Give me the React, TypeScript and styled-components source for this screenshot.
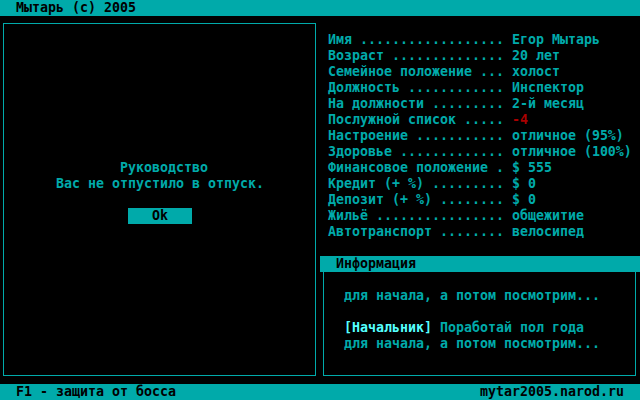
import React from 'react';
import styled, { createGlobalStyle } from 'styled-components';

const CYAN = '#00aaaa';
const BRIGHT_CYAN = '#55ffff';
const RED = '#aa0000';

const GlobalStyle = createGlobalStyle`
  html, body {
    margin: 0;
    padding: 0;
    background: #000;
  }
`;

type Stat = { name: string; value: string; alert?: boolean };

const stats: Stat[] = [
  { name: 'Имя', value: 'Егор Мытарь' },
  { name: 'Возраст', value: '20 лет' },
  { name: 'Семейное положение', value: 'холост' },
  { name: 'Должность', value: 'Инспектор' },
  { name: 'На должности', value: '2-й месяц' },
  { name: 'Послужной список', value: '-4', alert: true },
  { name: 'Настроение', value: 'отличное (95%)' },
  { name: 'Здоровье', value: 'отличное (100%)' },
  { name: 'Финансовое положение', value: '$ 555' },
  { name: 'Кредит (+ %)', value: '$ 0' },
  { name: 'Депозит (+ %)', value: '$ 0' },
  { name: 'Жильё', value: 'общежитие' },
  { name: 'Автотранспорт', value: 'велосипед' },
];

// label column is 23 cells wide: name, space, dot leader, space
const leader = (name: string) => `${name} ${'.'.repeat(21 - name.length)} `;

const App: React.FC = () => {
  return (
    <>
      <GlobalStyle />
      <Screen>
        <Bar>
          <span>Мытарь (с) 2005</span>
        </Bar>

        <Main>
          <LeftColumn>
            <Panel>
              <Line $col={15}>Руководство</Line>
              <Line $col={7}>Вас не отпустило в отпуск.</Line>
              <OkButton>Ok</OkButton>
            </Panel>
          </LeftColumn>

          <RightColumn>
            <StatList>
              {stats.map(s => (
                <StatRow key={s.name}>
                  {leader(s.name)}
                  <StatValue $alert={s.alert}>{s.value}</StatValue>
                </StatRow>
              ))}
            </StatList>

            <InfoHeader>Информация</InfoHeader>
            <InfoBox>
              <Message>для начала, а потом посмотрим...</Message>
              <Message> </Message>
              <Message>
                <Speaker>[Начальник]</Speaker> Поработай пол года
              </Message>
              <Message>для начала, а потом посмотрим...</Message>
            </InfoBox>
          </RightColumn>
        </Main>

        <Bar>
          <span>F1 - защита от босса</span>
          <span>mytar2005.narod.ru</span>
        </Bar>
      </Screen>
    </>
  );
};

export default App;

const Screen = styled.div`
  width: 640px;
  height: 400px;
  display: grid;
  grid-template-rows: 16px 1fr 16px;
  background: #000;
  color: ${CYAN};
  font-family: 'DejaVu Sans Mono', 'Liberation Mono', monospace;
  font-weight: bold;
  font-size: 13.29px;
  line-height: 16px;
  white-space: pre;
  overflow: hidden;
`;

const Bar = styled.div`
  display: flex;
  justify-content: space-between;
  padding: 0 16px;
  background: ${CYAN};
  color: #000;
`;

const Main = styled.div`
  display: grid;
  grid-template-columns: 320px 320px;
  min-height: 0;
`;

const LeftColumn = styled.div`
  display: flex;
  flex-direction: column;
`;

const Panel = styled.div`
  flex: 1;
  margin: 7px 4px 8px 3px;
  border: 1px solid ${CYAN};
  padding-top: 136px;
`;

const Line = styled.div<{ $col: number }>`
  height: 16px;
  padding-left: ${p => p.$col * 8 - 4}px;
`;

const OkButton = styled.div`
  width: 64px;
  height: 16px;
  margin: 16px 0 0 124px;
  background: ${CYAN};
  color: #000;
  text-align: center;
`;

const RightColumn = styled.div`
  display: flex;
  flex-direction: column;
`;

const StatList = styled.div`
  padding: 16px 0 0 8px;
`;

const StatRow = styled.div`
  height: 16px;
`;

const StatValue = styled.span<{ $alert?: boolean }>`
  color: ${p => (p.$alert ? RED : CYAN)};
`;

const InfoHeader = styled.div`
  margin-top: 16px;
  height: 16px;
  padding-left: 16px;
  background: ${CYAN};
  color: #000;
`;

const InfoBox = styled.div`
  flex: 1;
  margin: 0 4px 8px 3px;
  border: 1px solid ${CYAN};
  border-top: none;
  padding: 16px 0 0 20px;
`;

const Message = styled.div`
  height: 16px;
`;

const Speaker = styled.span`
  color: ${BRIGHT_CYAN};
`;
